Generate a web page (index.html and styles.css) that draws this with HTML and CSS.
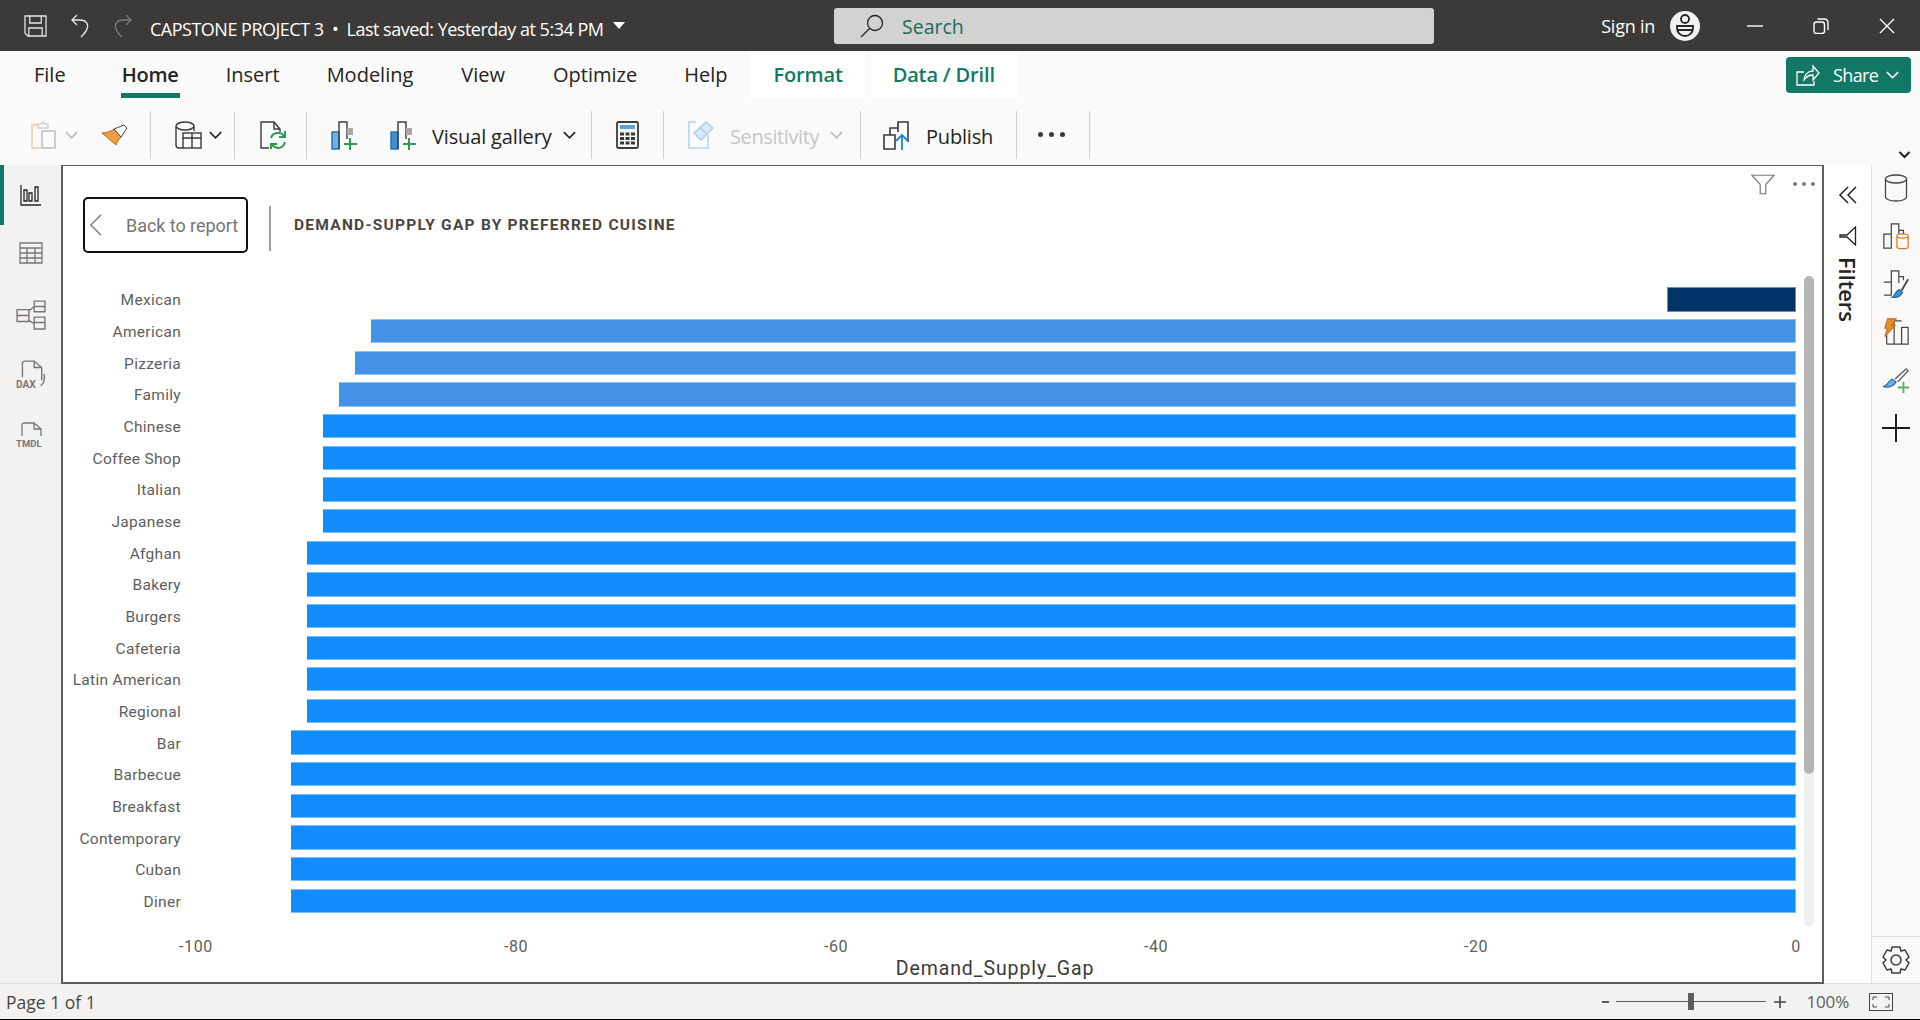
FILE: index.html
```html
<!DOCTYPE html>
<html lang="en">
<head>
    <meta charset="UTF-8">
    <title>CAPSTONE PROJECT 3 - Power BI Desktop</title>
    <link rel="stylesheet" href="styles.css">
</head>
<body>
    <div class="app">
        <div class="titlebar">
            <div class="quick-icons">
                <svg class="quick-icon save" viewBox="0 0 24 22" preserveAspectRatio="none"><path d="M1 1h22v20H4l-3-3zM6 1v7h12V1M5 21v-8h14v8M5 13h14"/></svg>
                <svg class="quick-icon" viewBox="0 0 20 24"><path d="M7 1 2 6l5 5M2 6h8c6 0 9 4 7 9-1 3-4 6-6 8"/></svg>
                <svg class="quick-icon dim" viewBox="0 0 20 24"><path d="m13 1 5 5-5 5M18 6h-8c-6 0-9 4-7 9 1 3 4 6 6 8"/></svg>
            </div>
            <div class="doc-title">CAPSTONE PROJECT 3 &nbsp;•&nbsp; Last saved: Yesterday at 5:34 PM<span class="caret"></span></div>
            <div class="search">
                <svg class="search-icon" viewBox="0 0 24 24"><circle cx="15" cy="9" r="7.5"/><path d="M9.5 14.5 1 23"/></svg>
                <span>Search</span>
            </div>
            <div class="window-area">
                <span class="sign-in">Sign in</span>
                <svg class="avatar" viewBox="0 0 30 30"><circle cx="15" cy="15" r="15" fill="#f3f2f1" stroke="none"/><circle cx="15" cy="8" r="4" stroke="#252423" stroke-width="1.8"/><path d="M7 15h16v2c0 5-4 8-8 8s-8-3-8-8zM7 19h16" stroke="#252423" stroke-width="1.8"/></svg>
                <svg class="win-btn win-min" viewBox="0 0 16 16"><path d="M0 8h16"/></svg>
                <svg class="win-btn win-max" viewBox="0 0 16 16"><rect x="1" y="4" width="10.5" height="11.5" rx="2.5"/><path d="M4.5 1H11c2.5 0 4 1.5 4 4v7"/></svg>
                <svg class="win-btn win-close" viewBox="0 0 16 16"><path d="m1 1 14 14M15 1 1 15"/></svg>
            </div>
        </div>

        <div class="ribbon">
            <div class="tab-row">
                <span class="tab file">File</span>
                <span class="tab active">Home</span>
                <span class="tab insert">Insert</span>
                <span class="tab">Modeling</span>
                <span class="tab">View</span>
                <span class="tab optimize">Optimize</span>
                <span class="tab help">Help</span>
                <span class="tab context format">Format</span>
                <span class="tab context drill">Data / Drill</span>
                <div class="share">
                    <svg class="share-icon" viewBox="0 0 24 22"><path d="M8 8H1v13h17v-4M8 16c0-5 4-9 9-9V2l6 7-6 7v-5c-4 0-7 2-9 5z"/></svg>
                    <span>Share</span>
                    <svg class="share-chev" viewBox="0 0 12 8"><path d="m1 1 5 5 5-5"/></svg>
                </div>
            </div>
            <div class="tool-row">
                <div class="tool-group g-clip">
                    <svg class="ico clip" viewBox="0 0 26 28"><path d="M7 4H1v23h9" stroke="#eccba5" stroke-width="1.5"/><path d="M7 7V3h3l2-2 2 2h3v4z" stroke="#cfcfcf" stroke-width="1.5"/><rect x="11" y="10" width="13" height="17" stroke="#bdbdbd" stroke-width="1.5"/></svg>
                    <svg class="chev light" viewBox="0 0 12 8"><path d="m1 1 5 5 5-5"/></svg>
                    <svg class="ico brush" viewBox="0 0 27 22"><path d="M1 9c5 0 9-2 12-4l7 8c-2 2-4 5-5 8z" fill="#ef9f43" stroke="#b9691a"/><path d="m13 5 10-4 3 3-6 9z" fill="#fff" stroke="#444"/></svg>
                </div>
                <div class="tool-group g-data">
                    <svg class="ico db" viewBox="0 0 27 28"><path d="M8 27H4c-2 0-3-1-3-3V5c0-2 4-4 9-4s9 2 9 4v5M1 5c0 2 4 4 9 4s9-2 9-4" stroke="#3b3a39" stroke-width="1.4"/><rect x="8" y="12" width="18" height="15" stroke="#3b3a39" stroke-width="1.4"/><path d="M8 17h18M17 12v15" stroke="#3b3a39" stroke-width="1.4"/></svg>
                    <svg class="chev" viewBox="0 0 12 8"><path d="m1 1 5 5 5-5"/></svg>
                </div>
                <div class="tool-group g-refresh">
                    <svg class="ico refresh" viewBox="0 0 27 28"><path d="M9 27H1V1h13l6 7v3M14 1v7h6" stroke="#3b3a39" stroke-width="1.4"/><path d="M11 17c1-4 4-5 7-5 3 0 5 1 6 3M25 21c-1 4-4 6-7 6-3 0-5-2-6-3" stroke="#2f9a4c" stroke-width="2"/><path d="M25 10v6h-6M11 28v-5h6" stroke="#2f9a4c" stroke-width="2"/></svg>
                </div>
                <div class="tool-group g-visual">
                    <svg class="ico nv" viewBox="0 0 27 29"><rect x="1" y="11" width="7" height="17" fill="#6fb0e8" stroke="#1a6fb5" stroke-width="1.4"/><path d="M8 28V1h8v17" stroke="#3b3a39" stroke-width="1.4"/><rect x="16" y="7" width="6" height="7" fill="#a9a9a9" stroke="none"/><path d="M19 17v12M13 23h13" stroke="#2f9a4c" stroke-width="2"/></svg>
                    <svg class="ico nv second" viewBox="0 0 27 29"><rect x="1" y="11" width="7" height="17" fill="#3f8fd9" stroke="#1a6fb5" stroke-width="1.4"/><path d="M8 28V1h8v17" stroke="#3b3a39" stroke-width="1.4"/><rect x="16" y="7" width="6" height="7" fill="#a9a9a9" stroke="none"/><path d="M19 17v12M13 23h13" stroke="#2f9a4c" stroke-width="2"/></svg>
                    <span class="tool-label gallery">Visual gallery</span>
                    <svg class="chev" viewBox="0 0 12 8"><path d="m1 1 5 5 5-5"/></svg>
                </div>
                <div class="tool-group g-calc">
                    <svg class="ico calc" viewBox="0 0 23 28"><rect x="1" y="1" width="21" height="26" rx="1.5" stroke="#3b3a39" stroke-width="1.8"/><rect x="4" y="4" width="15" height="4" fill="#5aa0dc" stroke="none"/><path d="M4 13h4M9.5 13h4M15 13h4M4 17.5h4M9.5 17.5h4M15 17.5h4M4 22h4M9.5 22h4M15 22h4" stroke="#3b3a39" stroke-width="3"/></svg>
                </div>
                <div class="tool-group g-sens">
                    <svg class="ico sens" viewBox="0 0 26 28"><path d="M8 1H1v26h19V14" stroke="#b5d6ea" stroke-width="1.6"/><path d="m6 12 12-11 7 6-12 12z" fill="#d5e8f4" stroke="#a9cfe6" stroke-width="1.4"/><path d="m12 7 7 6" stroke="#a9cfe6" stroke-width="1.4"/></svg>
                    <span class="tool-label disabled">Sensitivity</span>
                    <svg class="chev light" viewBox="0 0 12 8"><path d="m1 1 5 5 5-5"/></svg>
                </div>
                <div class="tool-group g-publish">
                    <svg class="ico publish" viewBox="0 0 27 29"><path d="M1 14h11v14H1zM7 14V7h8v4M15 7V1h10v20" stroke="#3b3a39" stroke-width="1.6"/><path d="M19 29V14M13 20l6-6 6 6" stroke="#1a84d0" stroke-width="1.8"/></svg>
                    <span class="tool-label publish-label">Publish</span>
                </div>
                <div class="tool-group g-more">
                    <span class="more-dots"><i></i><i></i><i></i></span>
                </div>
                <svg class="ribbon-collapse" viewBox="0 0 12 8"><path d="m1 1 5 5 5-5"/></svg>
            </div>
        </div>

        <div class="workspace">
            <div class="left-rail">
                <div class="rail-item selected">
                    <svg viewBox="0 0 22 22"><path d="M1 1v20h20M4 17V6h3v11zM9 17V9h3v8zM15 17V3h3v14z"/></svg>
                </div>
                <div class="rail-item table-item">
                    <svg class="grey" viewBox="0 0 24 24"><path d="M1 2h22v20H1zM1 7h22M1 12h22M1 17h22M8 7v15M16 7v15"/></svg>
                </div>
                <div class="rail-item">
                    <svg class="grey big" viewBox="0 0 28 28"><path d="M1 9h11v11H1zM1 14.5h11M17 1h10v10H17zM17 6h10M17 16h10v11H17zM17 21h10M12 10l5-4M12 19l5 3"/></svg>
                </div>
                <div class="rail-item">
                    <svg class="grey big" viewBox="0 0 28 28"><path d="M6 16V3c0-1 1-2 2-2h9l7 6v12M17 1v6h7M26 13c1 4 1 8-3 11"/><text class="rail-text" x="0" y="26">DAX</text></svg>
                </div>
                <div class="rail-item">
                    <svg class="grey big" viewBox="0 0 30 28"><path d="M6 15V4c0-1 1-2 2-2h10l7 6v7M18 2v6h7"/><text class="rail-text" x="0" y="26">TMDL</text></svg>
                </div>
            </div>

            <div class="canvas">
                <div class="visual-head">
                    <svg class="head-filter" viewBox="0 0 26 22"><path d="M1 1h24l-9 10v10h-6V11z"/></svg>
                    <span class="head-dots"><i></i><i></i><i></i></span>
                </div>
                <div class="canvas-top">
                    <div class="back-btn">
                        <svg viewBox="0 0 14 24"><path d="M13 1 2 12l11 11"/></svg>
                        <span>Back to report</span>
                    </div>
                    <div class="top-divider"></div>
                    <div class="chart-title">DEMAND-SUPPLY GAP BY PREFERRED CUISINE</div>
                </div>
                <div class="chart">
                    <div class="rows" id="rows"></div>
                    <div class="scroll-track"><div class="scroll-thumb"></div></div>
                </div>
                <div class="axis">
                    <span>-100</span><span>-80</span><span>-60</span><span>-40</span><span>-20</span><span>0</span>
                </div>
                <div class="axis-title">Demand_Supply_Gap</div>
            </div>

            <div class="filters-pane">
                <svg class="filters-chev" viewBox="0 0 20 20"><path d="M10 2 2 10l8 8M18 2l-8 8 8 8"/></svg>
                <svg class="filters-funnel" viewBox="0 0 18 20"><path d="M16.5 1v18L8 11H1V9h7z"/></svg>
                <span class="filters-label">Filters</span>
            </div>

            <div class="right-rail">
                <div class="rail-icons">
                    <svg viewBox="0 0 24 28"><ellipse cx="12" cy="5" rx="10.5" ry="4"/><path d="M1.5 5v18c0 2 4 4 10.5 4s10.5-2 10.500-4V5"/></svg>
                    <svg viewBox="0 0 28 30"><path d="M1 28V13h8v15zM9 28V2h8v11M17 9h5v4"/><path d="M15 15c0-3 12-3 12 0v12c0 2-12 2-12 0zM15 15c0 3 12 3 12 0" stroke="#d9771a"/></svg>
                    <svg viewBox="0 0 28 30"><path d="M1 13h8v14H1M9 13V1h8v13M17 7h5v4"/><path d="M10 29c3-1 3-7 8-8l3 3c-2 4-6 6-11 5z" fill="#3f8fd9" stroke="#2b6aa8"/><path d="m20 22 7-12" stroke-width="2"/></svg>
                    <svg viewBox="0 0 28 30"><path d="M4 28h23V10h-7v18M12 28V3h8M4 28V18"/><path d="M5 1h9L9 8h4L2 20l3-9H2z" fill="#e5912a" stroke="#c8701a"/></svg>
                    <svg viewBox="0 0 30 28"><path d="M1 21c5 0 6-7 10-8l4 3c-2 4-7 7-14 5z" fill="#6fb0e8" stroke="#2b6aa8"/><path d="M14 13 26 2l2 2-11 12" stroke="#555"/><path d="M23 16v12M17 22h12" stroke="#5fad6f" stroke-width="2"/></svg>
                    <svg viewBox="0 0 26 26"><path d="M13 0v26M0 13h26" stroke="#1b1a19" stroke-width="1.8"/></svg>
                </div>
                <div class="rail-gear">
                    <svg viewBox="0 0 30 30"><circle cx="15" cy="15" r="5"/><path d="M11 2h8l1 4 4-1 4 7-3 3 3 3-4 7-4-1-1 4h-8l-1-4-4 1-4-7 3-3-3-3 4-7 4 1z" stroke-linejoin="round"/></svg>
                </div>
            </div>
        </div>

        <div class="statusbar">
            <span class="page-count">Page 1 of 1</span>
            <div class="zoom-area">
                <span class="zoom-minus"></span>
                <div class="zoom-slider"><span class="zoom-thumb"></span></div>
                <svg class="zoom-plus" viewBox="0 0 12 12"><path d="M6 0v12M0 6h12"/></svg>
                <span class="zoom-pct">100%</span>
                <svg class="fit-icon" viewBox="0 0 24 18"><rect x="0.5" y="0.5" width="23" height="17"/><path d="M4 7V4h4M16 4h4v3M20 11v3h-4M8 14H4v-3"/></svg>
            </div>
        </div>
    </div>

    <script src="chart.js"></script>
</body>
</html>
```

FILE: styles.css
```css
* {
    margin: 0;
    padding: 0;
    box-sizing: border-box;
}

html, body {
    height: 100%;
    overflow: hidden;
}

body {
    font-family: "Open Sans", "Noto Sans", sans-serif;
    color: #252423;
    background: #f3f2f1;
}

svg {
    fill: none;
    stroke: currentColor;
    display: block;
    flex: none;
}

.app {
    height: 1020px;
    display: flex;
    flex-direction: column;
    border-bottom: 1px solid #000;
}

/* title bar */
.titlebar {
    height: 51px;
    flex: none;
    background: #3b3a39;
    color: #fff;
    display: flex;
    align-items: center;
    position: relative;
}

.quick-icons {
    display: flex;
    align-items: center;
    gap: 23px;
    padding-left: 24px;
    width: 150px;
    flex: none;
}

.quick-icon {
    width: 20px;
    height: 24px;
    stroke: #e8e8e8;
    stroke-width: 1.3;
}

.quick-icon.save {
    width: 23px;
    height: 22px;
}

.quick-icon.dim {
    stroke: #7b7a79;
}

.doc-title {
    font-size: 18px;
    letter-spacing: -0.5px;
    white-space: nowrap;
    display: flex;
    align-items: center;
    margin-top: 6px;
}

.caret {
    width: 0;
    height: 0;
    border-left: 6px solid transparent;
    border-right: 6px solid transparent;
    border-top: 7px solid #fff;
    margin-left: 10px;
    margin-top: -7px;
}

.search {
    position: absolute;
    left: 834px;
    top: 8px;
    width: 600px;
    height: 36px;
    background: #d2d2d0;
    border-radius: 3px;
    display: flex;
    align-items: center;
    padding-left: 26px;
    gap: 18px;
    color: #1c6b5c;
    font-size: 19.5px;
}

.search-icon {
    width: 24px;
    height: 24px;
    stroke: #252423;
    stroke-width: 1.3;
}

.window-area {
    position: absolute;
    right: 0;
    top: 0;
    height: 51px;
    display: flex;
    align-items: center;
}

.sign-in {
    font-size: 18px;
    letter-spacing: -0.25px;
    margin-right: 15px;
}

.avatar {
    width: 30px;
    height: 30px;
    margin-top: 1px;
}

.win-btn {
    width: 16px;
    height: 16px;
    stroke: #fff;
    stroke-width: 1.4;
}

.win-min {
    margin-left: 47px;
}

.win-max {
    margin-left: 50px;
}

.win-close {
    margin-left: 50px;
    margin-right: 25px;
}

/* ribbon */
.ribbon {
    height: 114px;
    flex: none;
    background: #fafafa;
    position: relative;
}

.tab-row {
    height: 50px;
    display: flex;
    align-items: flex-start;
    padding-left: 34px;
    font-size: 20px;
}

.tab {
    height: 46px;
    margin-top: 1px;
    padding-top: 9px;
    margin-right: 48px;
    position: relative;
    white-space: nowrap;
}

.tab.file {
    margin-right: 56px;
}

.tab.active,
.tab.insert,
.tab.optimize {
    margin-right: 47px;
}

.tab.help {
    margin-right: 23px;
}

.tab.active {
    font-weight: 600;
    letter-spacing: -0.2px;
}

.tab.active::after {
    content: "";
    position: absolute;
    left: -1px;
    right: -1px;
    top: 41px;
    height: 5px;
    background: #117865;
}

.tab.context {
    color: #117865;
    font-weight: 600;
    background: #fff;
    margin-right: 6px;
    letter-spacing: -0.15px;
}

.tab.format {
    padding-left: 23px;
    padding-right: 22px;
}

.tab.drill {
    padding-left: 22px;
    padding-right: 23px;
}

.share {
    position: absolute;
    right: 9px;
    top: 6px;
    width: 125px;
    height: 36px;
    border-radius: 4px;
    background: #117865;
    color: #fff;
    display: flex;
    align-items: center;
    padding-left: 10px;
    font-size: 18px;
    letter-spacing: -0.6px;
}

.share-icon {
    width: 24px;
    height: 22px;
    stroke: #fff;
    stroke-width: 1.3;
    margin-right: 13px;
}

.share-chev {
    width: 15px;
    height: 9px;
    stroke: #fff;
    stroke-width: 1.4;
    margin-left: 7px;
}

.tool-row {
    display: flex;
    align-items: center;
    height: 48px;
    margin-top: 10px;
}

.tool-group {
    height: 48px;
    display: flex;
    align-items: center;
    border-right: 1px solid #d2d0ce;
    flex: none;
}

.g-clip { width: 151px; padding-left: 31px; }
.g-data { width: 84px; padding-left: 24px; }
.g-refresh { width: 72px; padding-left: 25px; }
.g-visual { width: 285px; padding-left: 24px; }
.g-calc { width: 72px; padding-left: 24px; }
.g-sens { width: 197px; padding-left: 24px; }
.g-publish { width: 156px; padding-left: 22px; }
.g-more { width: 73px; padding-left: 21px; }

.ico {
    width: 27px;
    height: 28px;
}

.ico.clip {
    width: 26px;
}

.ico.brush {
    height: 22px;
    margin-left: 22px;
}

.ico.db {
    margin-right: 6px;
}

.ico.nv {
    height: 29px;
}

.ico.nv.second {
    margin-left: 32px;
}

.ico.calc {
    width: 23px;
}

.ico.sens {
    width: 26px;
}

.ico.publish {
    height: 29px;
}

.chev {
    width: 15px;
    height: 9px;
    stroke: #252423;
    stroke-width: 1.5;
}

.g-clip .chev {
    margin-left: 7px;
}

.chev.light {
    stroke: #bdbdbd;
}

.tool-label {
    font-size: 20px;
    white-space: nowrap;
    margin-top: 2px;
}

.tool-label.gallery {
    margin: 2px 10px 0 15px;
    letter-spacing: -0.15px;
}

.tool-label.publish-label {
    margin-left: 16px;
    letter-spacing: -0.2px;
}

.tool-label.disabled {
    color: #c8c6c4;
    margin: 2px 10px 0 16px;
    letter-spacing: -0.4px;
}

.more-dots {
    display: flex;
    gap: 6px;
    margin-top: -2px;
}

.more-dots i {
    width: 5px;
    height: 5px;
    background: #3b3a39;
    border-radius: 50%;
}

.ribbon-collapse {
    position: absolute;
    right: 9px;
    bottom: 6px;
    width: 13px;
    height: 8px;
    stroke: #252423;
    stroke-width: 2;
}

/* main area */
.workspace {
    flex: 1;
    min-height: 0;
    display: flex;
}

.left-rail {
    width: 61px;
    flex: none;
    background: #f3f2f1;
    border-bottom: 1px solid #e1dfdd;
}

.rail-item {
    height: 60px;
    display: flex;
    align-items: center;
    justify-content: center;
    position: relative;
}

.rail-item.table-item {
    padding-bottom: 4px;
}

.rail-item.selected::before {
    content: "";
    position: absolute;
    left: 0;
    top: 0;
    width: 4px;
    height: 60px;
    background: #117865;
}

.rail-item svg {
    width: 22px;
    height: 22px;
    stroke: #252423;
    stroke-width: 1.3;
}

.rail-item svg.grey {
    stroke: #797775;
    width: 24px;
    height: 24px;
}

.rail-item svg.big {
    width: 30px;
    height: 30px;
}

.rail-text {
    font-family: "Roboto", sans-serif;
    font-size: 9.5px;
    font-weight: 700;
    fill: #797775;
    stroke: none;
}

.canvas {
    width: 1763px;
    flex: none;
    background: #fff;
    border: 1px solid #605e5c;
    border-width: 1px 2px 2px 2px;
    position: relative;
    display: flex;
    flex-direction: column;
}

.visual-head {
    position: absolute;
    right: 7px;
    top: 8px;
    display: flex;
    align-items: center;
    gap: 18px;
}

.head-filter {
    width: 24px;
    height: 21px;
    stroke: #7a7a7a;
    stroke-width: 1.3;
}

.head-dots {
    display: flex;
    gap: 5px;
    margin-top: -2px;
}

.head-dots i {
    width: 4px;
    height: 4px;
    border-radius: 50%;
    background: #7a7a7a;
}

.canvas-top {
    height: 110px;
    flex: none;
    display: flex;
    align-items: flex-start;
    padding: 31px 0 0 20px;
}

.back-btn {
    width: 165px;
    height: 56px;
    border: 2px solid #111;
    border-radius: 5px;
    display: flex;
    align-items: center;
    padding-left: 4px;
    font-size: 18px;
    letter-spacing: -0.05px;
    color: #757575;
    font-family: "Roboto", sans-serif;
    flex: none;
}

.back-btn svg {
    width: 13px;
    height: 24px;
    stroke: #757575;
    stroke-width: 1.4;
    margin-right: 24px;
}

.top-divider {
    width: 2px;
    height: 45px;
    background: #a19f9d;
    margin: 9px 23px 0 21px;
    flex: none;
}

.chart-title {
    font-family: "Roboto", sans-serif;
    font-weight: 700;
    font-size: 15.5px;
    letter-spacing: 1.25px;
    color: #484644;
    margin-top: 19px;
    white-space: nowrap;
}

.chart {
    height: 652px;
    flex: none;
    display: flex;
    position: relative;
}

.rows {
    width: 1733px;
    flex: none;
    padding-top: 11.3px;
    display: flex;
    flex-direction: column;
    gap: 7.37px;
}

.bar-row {
    height: 24.3px;
    flex: none;
    display: flex;
    align-items: center;
}

.bar-label {
    width: 118px;
    flex: none;
    padding-top: 2px;
    text-align: right;
    font-family: "Roboto", sans-serif;
    font-size: 15.5px;
    letter-spacing: 0.3px;
    color: #605e5c;
    white-space: nowrap;
}

.bar-track {
    flex: 1;
    height: 100%;
    display: flex;
    justify-content: flex-end;
}

.bar {
    height: 100%;
    background: #118dff;
    border: 1px solid #74bcff;
    border-left: 0;
}

.bar.mid {
    background: #4493e6;
    border-color: #8dc0f5;
}

.bar.dark {
    background: #003366;
    border: 1px solid #6f8eae;
}

.scroll-track {
    position: absolute;
    left: 1741px;
    top: 0;
    width: 10px;
    height: 651px;
    background: #f1f1f1;
    border-radius: 5px;
}

.scroll-thumb {
    height: 498px;
    background: #b6b6b6;
    border-radius: 5px;
}

.axis {
    height: 32px;
    flex: none;
    font-family: "Roboto", sans-serif;
    font-size: 16px;
    letter-spacing: 0.6px;
    color: #605e5c;
    display: flex;
    justify-content: space-between;
    align-items: center;
    padding-top: 4px;
    margin-left: 133px;
    width: 1600px;
}

.axis span {
    width: 0;
    display: flex;
    justify-content: center;
    white-space: nowrap;
}

.axis-title {
    font-family: "Roboto", sans-serif;
    font-size: 19.5px;
    letter-spacing: 0.9px;
    color: #3b3a39;
    text-align: center;
    padding-left: 105px;
    margin-top: -3px;
}

/* filters pane */
.filters-pane {
    width: 48px;
    flex: none;
    background: #fff;
    border-right: 1px solid #e1dfdd;
    border-bottom: 1px solid #e1dfdd;
    display: flex;
    flex-direction: column;
    align-items: center;
    padding: 20px 0 0 0;
}

.filters-chev {
    width: 20px;
    height: 20px;
    stroke: #252423;
    stroke-width: 1.5;
}

.filters-funnel {
    width: 18px;
    height: 20px;
    stroke: #252423;
    stroke-width: 1.3;
    margin-top: 21px;
}

.filters-label {
    writing-mode: vertical-rl;
    font-size: 22px;
    font-weight: 600;
    margin-top: 11px;
    letter-spacing: -0.1px;
    line-height: 24px;
}

/* right rail */
.right-rail {
    width: 48px;
    flex: none;
    background: #faf9f8;
    display: flex;
    flex-direction: column;
    justify-content: space-between;
    border-bottom: 1px solid #e1dfdd;
}

.rail-icons {
    display: flex;
    flex-direction: column;
    align-items: center;
    gap: 20px;
    padding-top: 9px;
}

.rail-icons svg {
    width: 28px;
    height: 28px;
    stroke: #484644;
    stroke-width: 1.3;
}

.rail-gear {
    height: 47px;
    border-top: 1px solid #e1dfdd;
    display: flex;
    align-items: center;
    justify-content: center;
}

.rail-gear svg {
    width: 30px;
    height: 30px;
    stroke: #3b3a39;
    stroke-width: 1.5;
}

/* status bar */
.statusbar {
    height: 35px;
    flex: none;
    background: #f3f2f1;
    display: flex;
    align-items: center;
    justify-content: space-between;
    padding-left: 6px;
    font-size: 17.5px;
    color: #484644;
}

.zoom-area {
    display: flex;
    align-items: center;
    font-size: 17px;
}

.zoom-minus {
    width: 7px;
    height: 2px;
    background: #605e5c;
}

.zoom-slider {
    width: 150px;
    height: 1px;
    background: #605e5c;
    margin: 0 8px 0 7px;
    position: relative;
}

.zoom-thumb {
    position: absolute;
    left: 72px;
    top: -8px;
    width: 6px;
    height: 17px;
    background: #605e5c;
}

.zoom-plus {
    width: 12px;
    height: 12px;
    stroke: #484644;
    stroke-width: 1.6;
}

.zoom-pct {
    margin-left: 21px;
    color: #605e5c;
    letter-spacing: -0.2px;
}

.fit-icon {
    width: 24px;
    height: 18px;
    stroke: #484644;
    margin: 0 27px 0 20px;
}
```

FILE: chart.js
```js
// cuisine, gap value, colour class
var data = [
    ['Mexican', -8, 'dark'],
    ['American', -89, 'mid'],
    ['Pizzeria', -90, 'mid'],
    ['Family', -91, 'mid'],
    ['Chinese', -92, ''],
    ['Coffee Shop', -92, ''],
    ['Italian', -92, ''],
    ['Japanese', -92, ''],
    ['Afghan', -93, ''],
    ['Bakery', -93, ''],
    ['Burgers', -93, ''],
    ['Cafeteria', -93, ''],
    ['Latin American', -93, ''],
    ['Regional', -93, ''],
    ['Bar', -94, ''],
    ['Barbecue', -94, ''],
    ['Breakfast', -94, ''],
    ['Contemporary', -94, ''],
    ['Cuban', -94, ''],
    ['Diner', -94, '']
];

var rows = document.getElementById('rows');
var pxPerUnit = 16;

data.forEach(function (d) {
    var row = document.createElement('div');
    row.className = 'bar-row';
    var label = document.createElement('div');
    label.className = 'bar-label';
    label.textContent = d[0];
    var track = document.createElement('div');
    track.className = 'bar-track';
    var bar = document.createElement('div');
    bar.className = 'bar ' + d[2];
    bar.style.width = (Math.abs(d[1]) * pxPerUnit + 1) + 'px';
    track.appendChild(bar);
    row.appendChild(label);
    row.appendChild(track);
    rows.appendChild(row);
});
```
